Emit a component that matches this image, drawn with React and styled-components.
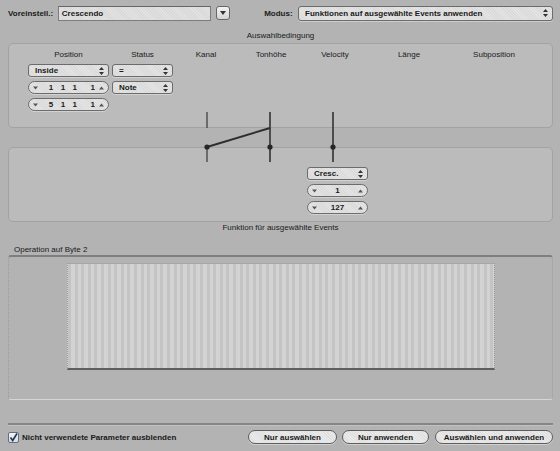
import styled, { createGlobalStyle } from 'styled-components';

const Global = createGlobalStyle`
  html, body {
    margin: 0;
    padding: 0;
    background: #b3b3b3;
  }
  body {
    width: 560px;
    height: 451px;
    overflow: hidden;
    font-family: "Liberation Sans", Arial, sans-serif;
    color: #1a1a1a;
  }
`;

const Window = styled.div`
  padding: 6px 7px 0 8px;
  font-size: 8px;
`;

const TopBar = styled.div`
  display: flex;
  align-items: center;
  height: 14px;
`;

const Label = styled.span`
  font-weight: bold;
  width: ${(p) => p.$w}px;
  margin-left: ${(p) => p.$ml || 0}px;
  white-space: nowrap;
`;

const TextField = styled.div`
  box-sizing: border-box;
  width: 154px;
  height: 15px;
  margin-left: 3px;
  border: 1px solid #7d7d7d;
  border-top-color: #666;
  background: repeating-linear-gradient(45deg, #d9d9d9 0 1px, #e2e2e2 1px 2px);
  font-weight: bold;
  padding: 2px 0 0 3px;
`;

const SmallButton = styled.div`
  box-sizing: border-box;
  width: 14px;
  height: 14px;
  margin-left: 5px;
  border: 1px solid #666;
  border-radius: 3px;
  background: linear-gradient(#f2f2f2, #d4d4d4);
  display: flex;
  align-items: center;
  justify-content: center;
`;

const PopupBox = styled.div`
  box-sizing: border-box;
  width: ${(p) => p.$w}px;
  height: ${(p) => p.$h || 13}px;
  border: 1px solid #6c6c6c;
  border-radius: 3px;
  background: repeating-linear-gradient(45deg, #dadada 0 1px, #e4e4e4 1px 2px);
  box-shadow: 0 1px 0 rgba(255, 255, 255, 0.35);
  display: flex;
  align-items: center;
  justify-content: space-between;
  padding: 0 4px 0 6px;
  font-weight: bold;
  white-space: nowrap;
`;

const StepperBox = styled.div`
  box-sizing: border-box;
  width: ${(p) => p.$w}px;
  height: 13px;
  border: 1px solid #6c6c6c;
  border-radius: 7px;
  background: repeating-linear-gradient(45deg, #dadada 0 1px, #e4e4e4 1px 2px);
  box-shadow: 0 1px 0 rgba(255, 255, 255, 0.35);
  display: flex;
  align-items: center;
  padding: 0 4px;
  font-weight: bold;
`;

const StepValues = styled.div`
  flex: 1;
  display: flex;
  justify-content: ${(p) => (p.$center ? 'center' : 'flex-end')};
  padding-right: ${(p) => (p.$center ? 0 : 4)}px;
  gap: 7.5px;
  & > span:last-child {
    margin-left: ${(p) => (p.$center ? 0 : 6)}px;
  }
`;

const SectionTitle = styled.div`
  text-align: center;
  line-height: 12px;
  margin: ${(p) => p.$m};
`;

const Stack = styled.div`
  position: relative;
  display: flex;
  flex-direction: column;
  gap: 19px;
`;

const Panel = styled.div`
  box-sizing: border-box;
  height: ${(p) => p.$h}px;
  border: 1px solid #a2a2a2;
  border-radius: 5px;
  background: #bbbbbb;
  padding-top: ${(p) => p.$pt}px;
`;

const Grid = styled.div`
  display: grid;
  grid-template-columns: 19px 81px 3px 61px 66px 64px 64px 84px 86px;
  row-gap: 4px;
  align-items: center;
`;

const Head = styled.div`
  grid-row: 1;
  grid-column: ${(p) => p.$c};
  text-align: center;
  line-height: 10px;
`;

const Cell = styled.div`
  grid-column: ${(p) => p.$c};
  grid-row: ${(p) => p.$r};
  margin-left: ${(p) => p.$ml || 0}px;
`;

const Connector = styled.svg`
  position: absolute;
  left: 0;
  top: 0;
  pointer-events: none;
`;

const GroupLabel = styled.div`
  margin: 11px 0 0 6px;
  line-height: 10px;
`;

const GroupBox = styled.div`
  box-sizing: border-box;
  height: 145px;
  border-top: 2px solid #7e7e7e;
  border-left: 1px dotted #9c9c9c;
  border-right: 1px dotted #9c9c9c;
  border-bottom: 1px solid #d6d6d6;
  border-radius: 3px;
  padding: 6px 0 0 58px;
`;

const Hatch = styled.div`
  box-sizing: border-box;
  width: 428px;
  height: 107px;
  border-top: 1px solid #a6a6a6;
  border-left: 1px dotted #9a9a9a;
  border-right: 1px dotted #9a9a9a;
  border-bottom: 2px solid #5e5e5e;
  background: repeating-linear-gradient(
    90deg,
    #c4c4c4 0 3px,
    #d3d3d3 3px 6.6px
  );
`;

const Separator = styled.div`
  height: 2px;
  background: #868686;
  border-bottom: 1px solid #c2c2c2;
  margin-top: 23px;
`;

const BottomBar = styled.div`
  display: flex;
  align-items: center;
  margin-top: 4px;
  height: 14px;
`;

const Check = styled.div`
  box-sizing: border-box;
  width: 11px;
  height: 11px;
  border: 1px solid #5f6f85;
  border-radius: 2px;
  background: linear-gradient(#f4f4f4, #d8dde4);
  display: flex;
  align-items: center;
  justify-content: center;
  margin-right: 3px;
`;

const Spacer = styled.div`
  flex: 1;
`;

const PushButton = styled.div`
  box-sizing: border-box;
  width: ${(p) => p.$w}px;
  height: 14px;
  margin-left: ${(p) => p.$ml}px;
  border: 1px solid #5e5e5e;
  border-radius: 7px;
  background: repeating-linear-gradient(45deg, #e0e0e0 0 1px, #eaeaea 1px 2px);
  box-shadow: 0 1px 0 rgba(255, 255, 255, 0.4);
  display: flex;
  align-items: center;
  justify-content: center;
  font-weight: bold;
  white-space: nowrap;
`;

const UpDown = () => (
  <svg width="5" height="8" viewBox="0 0 5 8">
    <path d="M2.5 0 L5 3 L0 3 Z M2.5 8 L5 5 L0 5 Z" fill="#333" />
  </svg>
);

const Tri = ({ up }) => (
  <svg width="5" height="4" viewBox="0 0 5 4">
    <path d={up ? 'M2.5 0.5 L5 3.5 L0 3.5 Z' : 'M0 0.5 L5 0.5 L2.5 3.5 Z'} fill="#555" />
  </svg>
);

const Popup = ({ label, w, h }) => (
  <PopupBox $w={w} $h={h}>
    <span>{label}</span>
    <UpDown />
  </PopupBox>
);

const Stepper = ({ values, w, center }) => (
  <StepperBox $w={w}>
    <Tri />
    <StepValues $center={center}>
      {values.map((v, i) => (
        <span key={i}>{v}</span>
      ))}
    </StepValues>
    <Tri up />
  </StepperBox>
);

const headers = [
  ['Position', '2'],
  ['Status', '4'],
  ['Kanal', '5'],
  ['Tonhöhe', '6'],
  ['Velocity', '7'],
  ['Länge', '8'],
  ['Subposition', '9'],
];

export default function App() {
  return (
    <Window>
      <Global />
      <TopBar>
        <Label $w={47}>Voreinstell.:</Label>
        <TextField>Crescendo</TextField>
        <SmallButton>
          <svg width="6" height="4" viewBox="0 0 6 4">
            <path d="M0 0 L6 0 L3 4 Z" fill="#333" />
          </svg>
        </SmallButton>
        <Label $w={34} $ml={34}>Modus:</Label>
        <Popup label="Funktionen auf ausgewählte Events anwenden" w={256} h={15} />
      </TopBar>

      <SectionTitle $m="10px 0 1px">Auswahlbedingung</SectionTitle>

      <Stack>
        <Panel $h={85} $pt={6}>
          <Grid>
            {headers.map(([t, c]) => (
              <Head key={t} $c={c}>{t}</Head>
            ))}
            <Cell $c="2" $r="2"><Popup label="Inside" w={81} /></Cell>
            <Cell $c="4" $r="2"><Popup label="=" w={61} /></Cell>
            <Cell $c="2" $r="3"><Stepper values={['1', '1', '1', '1']} w={81} /></Cell>
            <Cell $c="4" $r="3"><Popup label="Note" w={61} /></Cell>
            <Cell $c="2" $r="4"><Stepper values={['5', '1', '1', '1']} w={81} /></Cell>
          </Grid>
        </Panel>
        <Panel $h={75} $pt={19}>
          <Grid>
            <Cell $c="7" $r="1" $ml={4}><Popup label="Cresc." w={61} /></Cell>
            <Cell $c="7" $r="2" $ml={4}><Stepper values={['1']} w={61} center /></Cell>
            <Cell $c="7" $r="3" $ml={4}><Stepper values={['127']} w={61} center /></Cell>
          </Grid>
        </Panel>
        <Connector width="545" height="180" viewBox="0 0 545 180">
          <g stroke="#4a4a4a" strokeWidth="1.4" fill="none">
            <line x1="199" y1="69" x2="199" y2="85" />
            <line x1="199" y1="104" x2="199" y2="119" />
            <line x1="199" y1="104" x2="262" y2="85" strokeWidth="2" stroke="#2e2e2e" />
            <line x1="262" y1="69" x2="262" y2="119" strokeWidth="1.6" stroke="#333" />
            <line x1="325" y1="69" x2="325" y2="119" strokeWidth="1.6" stroke="#333" />
          </g>
          <g fill="#262626">
            <circle cx="199" cy="104" r="2.6" />
            <circle cx="262" cy="104" r="2.6" />
            <circle cx="325" cy="104" r="2.6" />
          </g>
        </Connector>
      </Stack>

      <SectionTitle $m="0">Funktion für ausgewählte Events</SectionTitle>

      <GroupLabel>Operation auf Byte 2</GroupLabel>
      <GroupBox>
        <Hatch />
      </GroupBox>

      <Separator />

      <BottomBar>
        <Check>
          <svg width="9" height="9" viewBox="0 0 9 9">
            <path d="M1.5 4.5 L3.7 7.5 L8 0.5" stroke="#24344e" strokeWidth="1.6" fill="none" />
          </svg>
        </Check>
        <Label>Nicht verwendete Parameter ausblenden</Label>
        <Spacer />
        <PushButton $w={89} $ml={0}>Nur auswählen</PushButton>
        <PushButton $w={87} $ml={5}>Nur anwenden</PushButton>
        <PushButton $w={118} $ml={6}>Auswählen und anwenden</PushButton>
      </BottomBar>
    </Window>
  );
}
